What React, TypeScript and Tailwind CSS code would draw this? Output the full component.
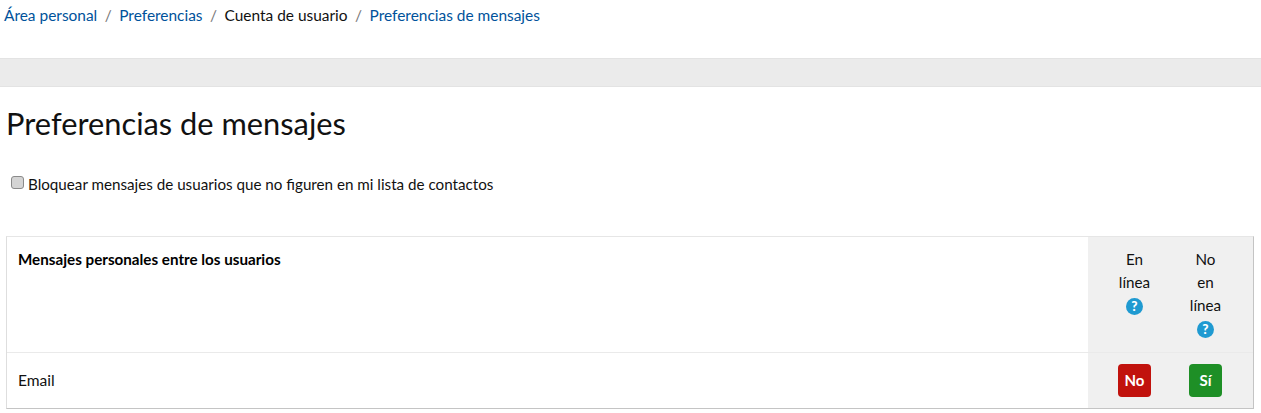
import React from "react";

function Help() {
  return (
    <svg width="17" height="17" viewBox="0 0 17 17" className="block mx-auto">
      <circle cx="8.5" cy="8.5" r="8.5" fill="#1f9ad1" />
      <text x="8.5" y="13.3" textAnchor="middle" fontSize="13.5" fontWeight="900" fill="#fff" fontFamily="Lato, sans-serif">?</text>
    </svg>
  );
}

function Sep() {
  return <span className="text-[#777] mx-[7.5px]">/</span>;
}

export default function App() {
  return (
    <div className="w-[1261px] h-[413px] overflow-hidden bg-white text-[15.2px] leading-[23px] text-[#111] font-['Lato',sans-serif]">
      <nav className="pl-1 pt-1 h-[58px] flex items-start whitespace-pre text-[15.45px]">
        <a className="text-[#00529b]">Área personal</a>
        <Sep />
        <a className="text-[#00529b]">Preferencias</a>
        <Sep />
        <span>Cuenta de usuario</span>
        <Sep />
        <a className="text-[#00529b]">Preferencias de mensajes</a>
      </nav>
      <div className="h-[29px] bg-[#ebebeb] border-t border-b border-[#e3e3e3]" />
      <h1 className="ml-1.5 mt-[18px] text-[30.8px] leading-[38px] text-[#111] font-normal">Preferencias de mensajes</h1>
      <label className="mt-[30px] ml-[11px] flex items-start h-[23px]">
        <input type="checkbox" className="w-[13px] h-[13px] mt-[3px] mr-[5px] appearance-none rounded-[3px] border border-[#8a8a8a] bg-[#d4d4d4]" />
        <span className="-ml-px">Bloquear mensajes de usuarios que no figuren en mi lista de contactos</span>
      </label>
      <div className="mt-[40px] ml-1.5 w-[1248px] h-[173px] border border-[#dedede] border-b-[#c4c4c4] border-r-[#c4c4c4] border-t-[#e6e6e6]">
        <div className="flex h-[116px] border-b border-[#eaeaea]">
          <div className="flex-1 pl-[11px] pt-[11px] font-bold text-black">Mensajes personales entre los usuarios</div>
          <div className="w-[165px] bg-[#f0f0f0] flex pt-[11px] pl-[11px] text-center">
            <div className="w-[71px]">
              <div>En</div>
              <div>línea</div>
              <div className="pt-[4px]"><Help /></div>
            </div>
            <div className="w-[71px]">
              <div>No</div>
              <div>en</div>
              <div>línea</div>
              <div className="pt-[4px]"><Help /></div>
            </div>
          </div>
        </div>
        <div className="flex h-[55px]">
          <div className="flex-1 pl-[11px] pt-4 text-[15.6px]">Email</div>
          <div className="w-[165px] bg-[#f0f0f0] flex pl-[11px] pt-[11px] text-center">
            <div className="w-[71px] flex justify-center">
              <button className="w-[33px] h-[33px] rounded-[4px] bg-[#c1120d] text-white font-bold text-[15px]">No</button>
            </div>
            <div className="w-[71px] flex justify-center">
              <button className="w-[33px] h-[33px] rounded-[4px] bg-[#1e8f26] text-white font-bold text-[15px]">Sí</button>
            </div>
          </div>
        </div>
      </div>
    </div>
  );
}
